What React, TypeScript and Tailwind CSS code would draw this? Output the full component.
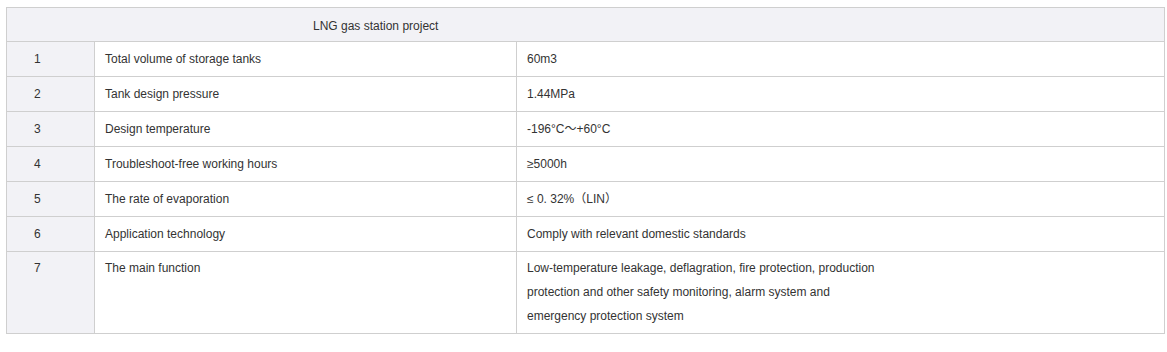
import React from "react";

const rows: [string, string, string[]][] = [
  ["1", "Total volume of storage tanks", ["60m3"]],
  ["2", "Tank design pressure", ["1.44MPa"]],
  ["3", "Design temperature", ["-196°C～+60°C"]],
  ["4", "Troubleshoot-free working hours", ["≥5000h"]],
  ["5", "The rate of evaporation", ["≤ 0. 32%（LIN）"]],
  ["6", "Application technology", ["Comply with relevant domestic standards"]],
];

const last = [
  "Low-temperature leakage, deflagration, fire protection, production",
  "protection and other safety monitoring, alarm system and",
  "emergency protection system",
];

export default function App() {
  return (
    <div className="bg-white w-[1167px] h-[352px] pt-[7px] pl-[6px] text-[#333] text-[12px] leading-[24px] [font-family:'Liberation_Sans',Arial,'Noto_Sans_CJK_SC',sans-serif]">
      <table className="border-collapse table-fixed w-[1158px]">
        <colgroup>
          <col className="w-[88px]" />
          <col className="w-[422px]" />
          <col className="w-[648px]" />
        </colgroup>
        <tbody>
          <tr className="bg-[#f2f2f6]">
            <td colSpan={3} className="border border-[#cfcfcf] pt-[6px] pb-[3px] pl-[306px] align-top">
              LNG gas station project
            </td>
          </tr>
          {rows.map(([n, label, value]) => (
            <tr key={n}>
              <td className="border border-[#cfcfcf] bg-[#f2f2f6] pl-[27px] py-[5px] align-top">{n}</td>
              <td className="border border-[#cfcfcf] px-[10px] py-[5px] align-top">{label}</td>
              <td className="border border-[#cfcfcf] px-[10px] py-[5px] align-top">
                {value.map((v, i) => (
                  <div key={i}>{v}</div>
                ))}
              </td>
            </tr>
          ))}
          <tr>
            <td className="border border-[#cfcfcf] bg-[#f2f2f6] pl-[27px] pt-[4px] pb-[5px] align-top">7</td>
            <td className="border border-[#cfcfcf] px-[10px] pt-[4px] pb-[5px] align-top">The main function</td>
            <td className="border border-[#cfcfcf] px-[10px] pt-[4px] pb-[5px] align-top">
              {last.map((v, i) => (
                <div key={i}>{v}</div>
              ))}
            </td>
          </tr>
        </tbody>
      </table>
    </div>
  );
}
